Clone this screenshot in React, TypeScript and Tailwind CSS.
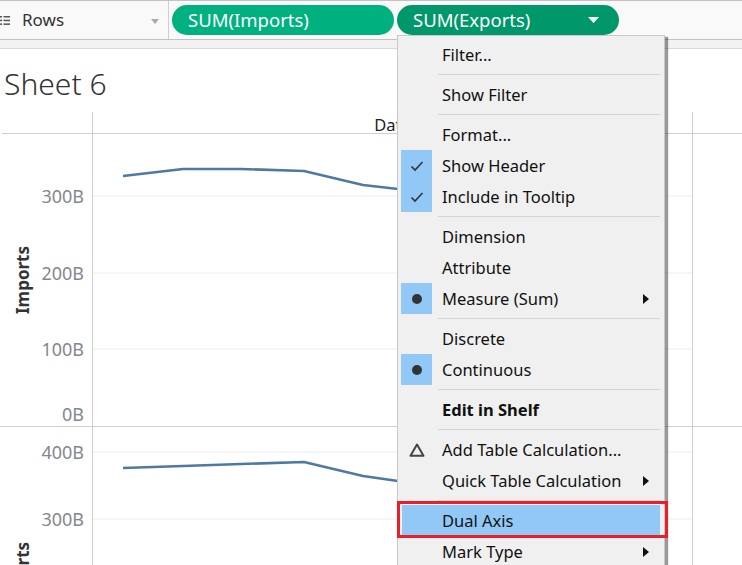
import React from "react";

type Item =
  | { kind: "sep" }
  | {
      kind: "item";
      label: string;
      icon?: "check" | "dot" | "delta";
      hl?: boolean;
      sub?: boolean;
      bold?: boolean;
      active?: boolean;
    };

const menu: Item[] = [
  { kind: "item", label: "Filter..." },
  { kind: "sep" },
  { kind: "item", label: "Show Filter" },
  { kind: "sep" },
  { kind: "item", label: "Format..." },
  { kind: "item", label: "Show Header", icon: "check", hl: true },
  { kind: "item", label: "Include in Tooltip", icon: "check", hl: true },
  { kind: "sep" },
  { kind: "item", label: "Dimension" },
  { kind: "item", label: "Attribute" },
  { kind: "item", label: "Measure (Sum)", icon: "dot", hl: true, sub: true },
  { kind: "sep" },
  { kind: "item", label: "Discrete" },
  { kind: "item", label: "Continuous", icon: "dot", hl: true },
  { kind: "sep" },
  { kind: "item", label: "Edit in Shelf", bold: true },
  { kind: "sep" },
  { kind: "item", label: "Add Table Calculation...", icon: "delta" },
  { kind: "item", label: "Quick Table Calculation", sub: true },
  { kind: "sep" },
  { kind: "item", label: "Dual Axis", active: true },
  { kind: "item", label: "Mark Type", sub: true },
];

function MenuIcon({ icon }: { icon?: string }) {
  if (icon === "check")
    return (
      <svg width="14" height="12" viewBox="0 0 14 12">
        <path d="M1.5 6.5 L5 10 L12.5 2" fill="none" stroke="#333" strokeWidth="1.6" />
      </svg>
    );
  if (icon === "dot")
    return (
      <svg width="12" height="12" viewBox="0 0 12 12">
        <circle cx="6" cy="6" r="5" fill="#333" />
      </svg>
    );
  if (icon === "delta")
    return (
      <svg width="16" height="14" viewBox="0 0 16 14">
        <path d="M8 1.5 L14.5 12.8 L1.5 12.8 Z" fill="none" stroke="#444" strokeWidth="2" strokeLinejoin="round" />
      </svg>
    );
  return null;
}

function Arrow() {
  return (
    <svg width="6" height="10" viewBox="0 0 6 10" className="absolute left-[245px] top-[11px]">
      <path d="M0 0 L6 5 L0 10 Z" fill="#111" />
    </svg>
  );
}

function ContextMenu() {
  return (
    <div className="absolute left-[397px] top-[35px] w-[268px] h-[540px] bg-[#f0f0f0] border border-[#c9c9c9] pt-[3px] shadow-[3px_2px_1px_rgba(0,0,0,0.4)] text-[#111]">
      {menu.map((m, i) =>
        m.kind === "sep" ? (
          <div key={i} className="h-[9px] pt-[4px] pl-[40px] pr-[4px]">
            <div className="h-px bg-[#d4d4d4]" />
          </div>
        ) : (
          <div
            key={i}
            className={`relative h-[31px] flex items-center ${m.active ? "mx-[4px] bg-[#91c8f6]" : ""}`}
          >
            <div
              className={`${m.active ? "w-[30px] ml-0" : "w-[31px] ml-[3px]"} h-[31px] flex items-center justify-center ${m.hl ? "bg-[#91c8f6]" : ""}`}
            >
              <MenuIcon icon={m.icon} />
            </div>
            <span className={`ml-[10px] mt-[2px] text-[16.5px] leading-none ${m.bold ? "font-bold" : ""}`}>{m.label}</span>
            {m.sub && <Arrow />}
          </div>
        )
      )}
    </div>
  );
}

const importsPts = "30,43 90,36 148,36 211,38 270,52 305,56 360,62 420,70 480,78 540,84 570,86";
const exportsPts = "30,41 90,39 148,37 211,35 270,49 305,54 360,60 420,66 480,72 540,76 570,78";

function Pane({
  title,
  ticks,
  grid,
  points,
  bottomBorder,
}: {
  title: string;
  ticks: { label: string; y: number }[];
  grid: number[];
  points: string;
  bottomBorder?: boolean;
}) {
  return (
    <div className={`flex h-[294px] ${bottomBorder ? "border-b border-[#cfcfcf]" : ""}`}>
      <div className="relative w-[93px] border-r border-[#cfcfcf]">
        <div className="absolute left-[23px] top-1/2 -translate-x-1/2 -translate-y-1/2 -rotate-90 whitespace-nowrap text-[17px] font-bold text-[#333]">
          {title}
        </div>
        {ticks.map((t) => (
          <div
            key={t.label}
            className="absolute right-[8px] -translate-y-1/2 text-[18px] leading-none text-[#84878e]"
            style={{ top: t.y }}
          >
            {t.label}
          </div>
        ))}
      </div>
      <div className="relative w-[600px] border-r border-[#cfcfcf]">
        <svg width="599" height="293" className="absolute left-0 top-0">
          {grid.map((g) => (
            <line key={g} x1="0" x2="599" y1={g} y2={g} stroke="#ececec" strokeWidth="1" />
          ))}
          <polyline points={points} fill="none" stroke="#4e79a7" strokeWidth="2.6" strokeLinejoin="round" />
        </svg>
      </div>
    </div>
  );
}

export default function App() {
  return (
    <div className="relative w-[742px] h-[565px] overflow-hidden bg-white font-['Noto_Sans',sans-serif] text-[#333]">
      {/* Rows shelf */}
      <div className="flex h-[40px] items-center border-y border-[#c3c3c3] bg-[#f9f9f9]">
        <div className="relative flex h-full w-[169px] items-center border-r border-[#cfcfcf]">
          <svg width="10" height="9" viewBox="0 0 10 9">
            <rect x="0" y="0" width="2" height="1.5" fill="#555" />
            <rect x="0" y="3.7" width="2" height="1.5" fill="#555" />
            <rect x="0" y="7.4" width="2" height="1.5" fill="#555" />
            <rect x="3.5" y="0" width="6.5" height="1.5" fill="#555" />
            <rect x="3.5" y="3.7" width="6.5" height="1.5" fill="#555" />
            <rect x="3.5" y="7.4" width="6.5" height="1.5" fill="#555" />
          </svg>
          <span className="ml-[12px] text-[17px] text-[#333]">Rows</span>
          <svg width="8" height="5" viewBox="0 0 8 5" className="absolute left-[151px] top-[18px]">
            <path d="M0 0 L8 0 L4 5 Z" fill="#aaa" />
          </svg>
        </div>
        <div className="ml-[3px] flex h-[30px] w-[222px] items-center rounded-full bg-[#00b180] pl-[16px] text-[18.5px] text-white">
          SUM(Imports)
        </div>
        <div className="relative ml-[3px] flex h-[30px] w-[222px] items-center rounded-full bg-[#00976a] pl-[16px] text-[18.5px] text-white">
          SUM(Exports)
          <svg width="11" height="6" viewBox="0 0 11 6" className="absolute left-[191px] top-[12px]">
            <path d="M0 0 L11 0 L5.5 6 Z" fill="#fff" />
          </svg>
        </div>
      </div>
      <div className="h-[9px] border-b border-[#d8d8d8] bg-[#f2f2f2]" />

      {/* Sheet */}
      <div className="pl-[4px] pt-[20px] h-[63px] text-[30px] font-light leading-none text-[#333]">Sheet 6</div>
      <div className="flex h-[22px] border-b border-[#cfcfcf] ml-[2px]">
        <div className="w-[91px] border-r border-[#cfcfcf]" />
        <div className="w-[600px] border-r border-[#cfcfcf] pt-[1px] text-center text-[16.5px] text-[#222]">Date</div>
      </div>
      <div className="-mt-px">
        <Pane
          title="Imports"
          ticks={[
            { label: "300B", y: 63 },
            { label: "200B", y: 140 },
            { label: "100B", y: 216 },
            { label: "0B", y: 281 },
          ]}
          grid={[63, 140, 216]}
          points={importsPts}
          bottomBorder
        />
        <Pane
          title="Exports"
          ticks={[
            { label: "400B", y: 25 },
            { label: "300B", y: 92 },
            { label: "200B", y: 159 },
          ]}
          grid={[25, 92, 159]}
          points={exportsPts}
        />
      </div>

      <ContextMenu />
      <div className="absolute left-[397px] top-[501px] h-[37px] w-[271px] border-[3px] border-[#e8202a]" />
    </div>
  );
}
